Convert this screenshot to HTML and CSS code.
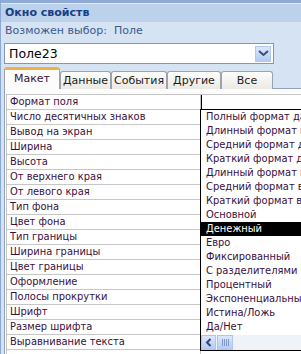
FILE: index.html
```html
<!DOCTYPE html>
<html lang="ru">
<head>
    <meta charset="UTF-8">
    <title>Окно свойств</title>
    <link rel="stylesheet" href="styles.css">
</head>
<body>
  <div class="dlg">
    <div class="title">Окно свойств</div>
    <div class="subtitle">Возможен выбор:&nbsp; Поле</div>

    <div class="combo">
      <span class="combo-text">Поле23</span>
      <span class="combo-btn">
        <svg width="11" height="7" viewBox="0 0 11 7"><path d="M1 1 L5.5 5 L10 1" fill="none" stroke="#3d4f72" stroke-width="2"/></svg>
      </span>
    </div>

    <div class="tabs">
      <div class="tab active" style="width: 56px">Макет</div>
      <div class="tab" style="width: 51px">Данные</div>
      <div class="tab" style="width: 56px">События</div>
      <div class="tab" style="width: 54px">Другие</div>
      <div class="tab" style="width: 52px">Все</div>
    </div>

    <div class="page">
      <div class="props" id="props">
        <div class="row"><div class="name">Формат поля</div><div class="val edit"></div></div>
      </div>

      <div class="list" id="list">
        <div class="hscroll">
          <span class="sb-btn">
            <svg width="7" height="9" viewBox="0 0 7 9"><path d="M5.5 1 L2 4.5 L5.5 8" fill="none" stroke="#2f4777" stroke-width="2"/></svg>
          </span>
          <span class="sb-thumb"><i></i><i></i><i></i><i></i></span>
        </div>
      </div>
    </div>
  </div>

  <script>
    const names = ['Число десятичных знаков', 'Вывод на экран', 'Ширина', 'Высота',
      'От верхнего края', 'От левого края', 'Тип фона', 'Цвет фона', 'Тип границы',
      'Ширина границы', 'Цвет границы', 'Оформление', 'Полосы прокрутки', 'Шрифт',
      'Размер шрифта', 'Выравнивание текста', ''];
    const formats = ['Полный формат даты', 'Длинный формат времени', 'Средний формат даты',
      'Краткий формат даты', 'Длинный формат времени', 'Средний формат времени',
      'Краткий формат времени', 'Основной', 'Денежный', 'Евро', 'Фиксированный',
      'С разделителями разрядов', 'Процентный', 'Экспоненциальный', 'Истина/Ложь', 'Да/Нет'];

    const props = document.getElementById('props');
    for (let n of names) {
      let row = document.createElement('div');
      row.className = 'row';
      row.innerHTML = '<div class="name">' + n + '</div><div class="val"></div>';
      props.appendChild(row);
    }

    const list = document.getElementById('list');
    const bar = list.querySelector('.hscroll');
    for (let f of formats) {
      let item = document.createElement('div');
      item.className = f === 'Денежный' ? 'item sel' : 'item';
      item.textContent = f;
      list.insertBefore(item, bar);
    }
  </script>
</body>
</html>
```

FILE: styles.css
```css
body {
  margin: 0;
  background: #d5e3f3;
  font-family: "DejaVu Sans Condensed", "DejaVu Sans", sans-serif;
  font-size: 11px;
  overflow: hidden;
}

.dlg {
  border-left: 1px solid #8ba7d4;
  height: 354px;
  box-sizing: border-box;
}

.title {
  height: 19px;
  border-top: 3px solid #8eaad5;
  box-shadow: inset 0 1px #dce8f7;
  background: #bcd1ea;
  color: #173f86;
  font-family: "DejaVu Sans", sans-serif;
  font-weight: bold;
  padding-left: 4px;
  line-height: 20px;
}

.subtitle {
  height: 18px;
  line-height: 17px;
  padding-left: 4px;
  color: #3c5a8e;
  font-family: "DejaVu Sans", sans-serif;
}

.combo {
  display: flex;
  align-items: center;
  justify-content: space-between;
  margin: 3px 27px 0 3px;
  height: 19px;
  border: 1px solid #8099bb;
  background: #fff;
}

.combo-text {
  padding-left: 4px;
  font-family: "DejaVu Sans", sans-serif;
  font-size: 12.5px;
  color: #000;
}

.combo-btn {
  display: flex;
  align-items: center;
  justify-content: center;
  width: 14px;
  height: 14px;
  margin-right: 2px;
  border: 1px solid #b4c8ec;
  background: linear-gradient(#dbe7fc, #b3cbf4);
}

.tabs {
  display: flex;
  align-items: flex-end;
  height: 22px;
  margin: 3px 0 0 3px;
  position: relative;
  z-index: 1;
}

.tab {
  box-sizing: border-box;
  height: 18px;
  border: 1px solid #9ba3ad;
  border-bottom: none;
  border-radius: 3px 3px 0 0;
  background: linear-gradient(#fdfdfb, #ebe9e3);
  text-align: center;
  line-height: 17px;
  color: #1c1c1c;
  font-family: "DejaVu Sans", sans-serif;
}

.tab.active {
  height: 22px;
  border-top: 3px solid #f3b043;
  background: #fcfcfc;
  color: #3a0f3d;
  line-height: 18px;
}

.page {
  position: relative;
  margin-left: 3px;
  margin-top: -1px;
  height: 265px;
  border: 1px solid #90a2bb;
  border-right: none;
  background: #fcfcfc;
  padding: 5px 0 0 1px;
}

.props {
  border-top: 1px solid #c6c6c6;
  border-left: 1px solid #c6c6c6;
}

.row {
  display: grid;
  grid-template-columns: 194px 1fr;
  height: 14px;
  border-bottom: 1px solid #c6c6c6;
}

.name {
  padding-left: 3px;
  line-height: 14px;
  color: #3a0f3d;
  background: #fff;
  border-right: 1px solid #c6c6c6;
  white-space: nowrap;
  overflow: hidden;
}

.val {
  background: #fff;
}

.val.edit {
  border-left: 1px solid #000;
}

.list {
  position: absolute;
  left: 195px;
  top: 20px;
  width: 120px;
  height: 240px;
  border: 1px solid #000;
  background: #fff;
}

.item {
  height: 14px;
  line-height: 14px;
  padding-left: 5px;
  color: #3a0f3d;
  white-space: nowrap;
}

.item.sel {
  background: #000;
  color: #fff;
}

.hscroll {
  display: flex;
  height: 15px;
  background: #eef2f9;
  margin-top: 1px;
}

.sb-btn {
  display: flex;
  align-items: center;
  justify-content: center;
  width: 15px;
  border: 1px solid #b1c5ea;
  box-sizing: border-box;
  background: linear-gradient(#dbe7fc, #b3cbf4);
}

.sb-thumb {
  display: flex;
  align-items: center;
  justify-content: center;
  gap: 1px;
  width: 16px;
  margin-left: 1px;
  border: 1px solid #b1c5ea;
  box-sizing: border-box;
  background: linear-gradient(#dbe7fc, #b3cbf4);
}

.sb-thumb i {
  width: 1px;
  height: 7px;
  background: #7f98c6;
}
```
